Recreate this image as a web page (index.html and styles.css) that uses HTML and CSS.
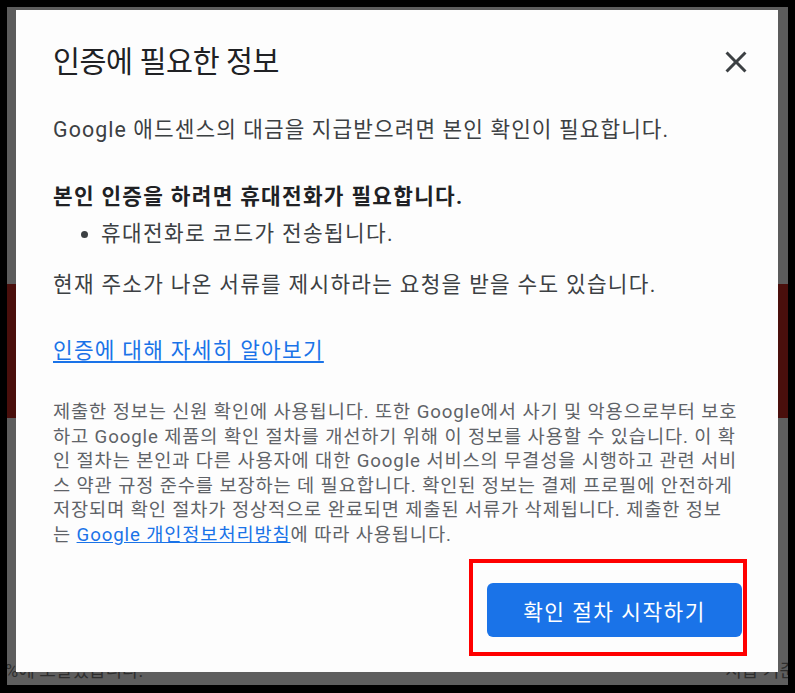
FILE: index.html
```html
<!DOCTYPE html>
<html lang="ko">
<head>
<meta charset="utf-8">
<title>인증에 필요한 정보</title>
<link rel="stylesheet" href="styles.css">
</head>
<body>
<div class="screen">
  <div class="backdrop">
    <div class="bg-top"></div>
    <div class="bg-band"></div>
    <div class="bg-mid"></div>
    <div class="bg-foot">
      <span>%에 도달했습니다.</span>
      <span>지급 기준</span>
    </div>
  </div>

  <div class="dialog" role="dialog">
    <div class="dialog-head">
      <h1 class="dialog-title">인증에 필요한 정보</h1>
      <button class="close-btn" aria-label="닫기">
        <svg viewBox="0 0 24 24" width="36" height="36"><path d="M19 6.41L17.59 5 12 10.59 6.41 5 5 6.41 10.59 12 5 17.59 6.41 19 12 13.41 17.59 19 19 17.59 13.41 12z" fill="currentColor"/></svg>
      </button>
    </div>
    <p class="txt p-intro">Google 애드센스의 대금을 지급받으려면 본인 확인이 필요합니다.</p>
    <p class="txt txt-bold">본인 인증을 하려면 휴대전화가 필요합니다.</p>
    <ul class="txt bullets">
      <li>휴대전화로 코드가 전송됩니다.</li>
    </ul>
    <p class="txt p-addr">현재 주소가 나온 서류를 제시하라는 요청을 받을 수도 있습니다.</p>
    <a class="txt learn" href="#">인증에 대해 자세히 알아보기</a>
    <p class="fine">제출한 정보는 신원 확인에 사용됩니다. 또한 Google에서 사기 및 악용으로부터 보호<br>하고 Google 제품의 확인 절차를 개선하기 위해 이 정보를 사용할 수 있습니다. 이 확<br>인 절차는 본인과 다른 사용자에 대한 Google 서비스의 무결성을 시행하고 관련 서비<br>스 약관 규정 준수를 보장하는 데 필요합니다. 확인된 정보는 결제 프로필에 안전하게<br>저장되며 확인 절차가 정상적으로 완료되면 제출된 서류가 삭제됩니다. 제출한 정보<br>는 <a href="#">Google 개인정보처리방침</a>에 따라 사용됩니다.</p>
    <div class="actions">
      <button class="primary">확인 절차 시작하기</button>
    </div>
  </div>

  <div class="highlight"></div>
</div>
</body>
</html>
```

FILE: styles.css
```css
html, body {
  margin: 0;
  padding: 0;
  background: #000;
}
body {
  font-family: Roboto, "Noto Sans CJK KR", sans-serif;
}
.screen {
  position: relative;
  margin: 7px;
  width: 781px;
  height: 678px;
  background: #5c5c5c;
  overflow: hidden;
}
.backdrop {
  display: flex;
  flex-direction: column;
  height: 100%;
}
.bg-top {
  height: 277px;
  background: #5c5c5c;
}
.bg-band {
  height: 134px;
  background: #4a0f0c;
}
.bg-mid {
  flex: 1;
  background: #5e5e5e;
}
.bg-foot {
  display: flex;
  justify-content: space-between;
  height: 24px;
  margin-top: -24px;
  font-size: 18px;
  line-height: 20px;
  color: #2e2e2e;
}
.bg-foot span:first-child { margin-left: -2px; }
.bg-foot span:last-child { margin-right: -8px; }

.dialog {
  position: absolute;
  left: 9px;
  top: 3px;
  width: 762px;
  height: 662px;
  box-sizing: border-box;
  padding: 34px 36px 0 37px;
  background: #fdfdfd;
  display: flex;
  flex-direction: column;
  align-items: flex-start;
}
.dialog-head {
  align-self: stretch;
  display: flex;
  justify-content: space-between;
  align-items: center;
  height: 36px;
}
.dialog-title {
  margin: 0;
  font-size: 29.3px;
  line-height: 36px;
  font-weight: 400;
  letter-spacing: -0.4px;
  color: #202124;
}
.close-btn {
  border: 0;
  background: none;
  padding: 0;
  margin-right: -12px;
  width: 36px;
  height: 36px;
  color: #3c4043;
  display: flex;
}
.txt {
  margin: 0;
  font-size: 21.33px;
  line-height: 28px;
  letter-spacing: 1.1px;
  color: #3c4043;
}
.p-intro { margin-top: 36px; }
.txt-bold {
  margin-top: 39px;
  font-weight: 700;
  letter-spacing: 1.3px;
  color: #202124;
}
.bullets {
  margin-top: 9px;
  padding-left: 48px;
  letter-spacing: 1.35px;
}
.p-addr {
  margin-top: 23px;
  letter-spacing: 1.3px;
}
.learn {
  margin-top: 38px;
  letter-spacing: 1.3px;
  color: #1a73e8;
  text-decoration: underline;
  text-underline-offset: 3px;
}
.fine {
  margin: 35px 0 0;
  font-size: 18.67px;
  line-height: 24.5px;
  letter-spacing: 0.88px;
  color: #5f6368;
  white-space: nowrap;
}
.fine a {
  color: #1a73e8;
  text-decoration: underline;
}
.actions {
  align-self: stretch;
  display: flex;
  justify-content: flex-end;
  margin-top: 36px;
}
.primary {
  width: 255px;
  height: 54px;
  border: 0;
  border-radius: 6px;
  background: #1a73e8;
  color: #fff;
  font-family: Roboto, "Noto Sans CJK KR", sans-serif;
  font-size: 21.33px;
  font-weight: 400;
  letter-spacing: 1.5px;
}
.highlight {
  position: absolute;
  left: 462px;
  top: 552px;
  width: 270px;
  height: 89px;
  border: 4.5px solid #ff0000;
}
```
